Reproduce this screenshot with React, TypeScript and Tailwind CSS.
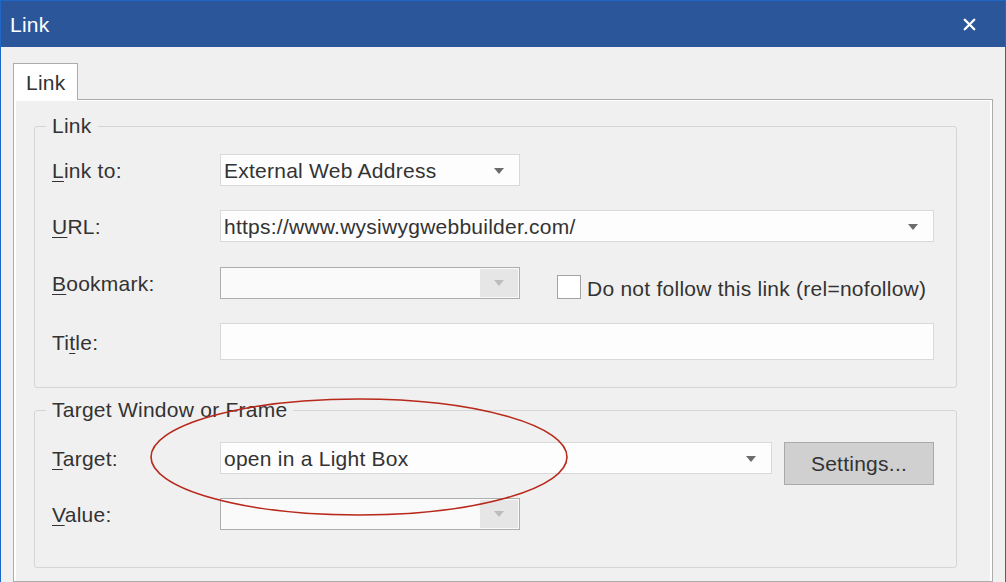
import { X } from "lucide-react"

function Accel({ text, at }: { text: string; at: number }) {
  return (
    <span>
      {text.slice(0, at)}
      <span className="underline underline-offset-[3px] decoration-1">{text[at]}</span>
      {text.slice(at + 1)}
    </span>
  )
}

function Arrow({ color }: { color: string }) {
  return (
    <svg width="10" height="6" viewBox="0 0 10 6">
      <path d="M0 0 H10 L5 6 Z" fill={color} />
    </svg>
  )
}

function Combo({ value, width, arrow = true }: { value?: string; width: string; arrow?: boolean }) {
  return (
    <div className={`${width} h-[32px] flex items-center justify-between border border-[#d9d9d9] bg-[#fdfdfd] pl-[3px] pr-[15px] pt-px`}>
      <span className="truncate">{value}</span>
      {arrow && <Arrow color="#6b6b6b" />}
    </div>
  )
}

function DisabledCombo() {
  return (
    <div className="w-[300px] h-[32px] flex border border-[#adadad] bg-[#fafafa] p-px">
      <div className="flex-1" />
      <div className="w-[38px] bg-[#e6e6e6] flex items-center justify-center">
        <Arrow color="#bdbdbd" />
      </div>
    </div>
  )
}

function Row({ label, children, className = "" }: { label: React.ReactNode; children: React.ReactNode; className?: string }) {
  return (
    <div className={`h-[32px] flex items-center ${className}`}>
      <div className="w-[168px] pt-[2px]">{label}</div>
      {children}
    </div>
  )
}

export default function App() {
  return (
    <div className="relative w-[1006px] h-[582px] overflow-hidden flex flex-col bg-[#f0f0f0] border-x border-t border-[#1f66c9] text-[21px] tracking-[0.25px] text-[#333333] font-['Liberation_Sans',Arial,sans-serif]">
      {/* Title bar */}
      <div className="h-[46px] shrink-0 bg-[#2b579a] flex items-center justify-between pl-[9px] pr-[26px]">
        <span className="text-white leading-none">Link</span>
        <X className="w-[19px] h-[19px] text-white" strokeWidth={3} />
      </div>

      <div className="flex-1 flex flex-col px-[12px] pt-[16px]">
        {/* Tab */}
        <div className="relative z-10 -mb-px w-[65px] h-[37px] border border-b-0 border-[#acacac] bg-white flex items-center pl-[12px] pt-[2px]">
          Link
        </div>

        {/* Tab panel */}
        <div className="flex-1 border border-[#acacac] bg-white pt-px px-[2px]">
          <div className="h-full bg-[#f0f0f0] pt-[13px]">
            <fieldset className="ml-[18px] w-[923px] border border-[#d5d5d5] rounded-[3px] pl-[17px] pb-[27px]">
              <legend className="-ml-[6px] px-[6px] leading-[24px]">Link</legend>
              <div className="flex flex-col mt-[16px]">
                <Row label={<Accel text="Link to:" at={0} />}>
                  <Combo value="External Web Address" width="w-[300px]" />
                </Row>
                <Row label={<Accel text="URL:" at={0} />} className="mt-[24px]">
                  <Combo value="https://www.wysiwygwebbuilder.com/" width="w-[714px]" />
                </Row>
                <Row label={<Accel text="Bookmark:" at={0} />} className="mt-[25px]">
                  <DisabledCombo />
                  <div className="self-stretch flex items-end ml-[37px]">
                    <div className="w-[24px] h-[24px] border border-[#a3a3a3] bg-white" />
                    <span className="ml-[6px] leading-[24px] translate-y-[2px]">Do not follow this link (rel=nofollow)</span>
                  </div>
                </Row>
                <div className="mt-[24px] h-[37px] flex items-center">
                  <div className="w-[168px] pt-[2px]"><Accel text="Title:" at={2} /></div>
                  <div className="w-[714px] h-[37px] border border-[#d9d9d9] bg-[#fdfdfd]" />
                </div>
              </div>
            </fieldset>

            <fieldset className="mt-[10px] ml-[18px] w-[923px] border border-[#d5d5d5] rounded-[3px] pl-[17px] pb-[37px]">
              <legend className="-ml-[6px] px-[6px] leading-[24px]">Target Window or Frame</legend>
              <div className="flex flex-col mt-[20px]">
                <div className="flex items-start">
                  <div className="w-[168px] h-[32px] pt-[2px] flex items-center">
                    <Accel text="Target:" at={0} />
                  </div>
                  <Combo value="open in a Light Box" width="w-[552px]" />
                  <button className="ml-[12px] w-[150px] h-[43px] border border-[#a9a9a9] bg-[#d0d0d0] text-[#333333]">
                    Settings...
                  </button>
                </div>
                <Row label={<Accel text="Value:" at={0} />} className="mt-[13px]">
                  <DisabledCombo />
                </Row>
              </div>
            </fieldset>
          </div>
        </div>
      </div>

      {/* Red annotation ellipse */}
      <svg className="absolute left-0 top-0 pointer-events-none" width="1006" height="582">
        <ellipse cx="358" cy="456" rx="208" ry="58" fill="none" stroke="#b8281b" strokeWidth="1.6" />
      </svg>
    </div>
  )
}
